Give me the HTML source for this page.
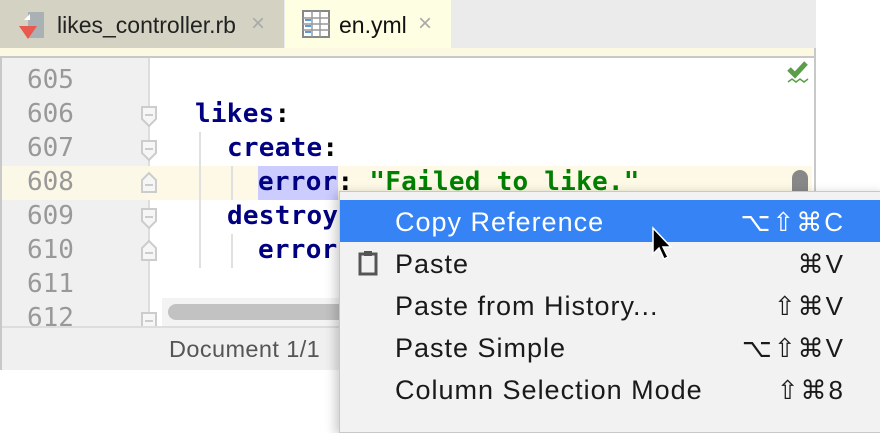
<!DOCTYPE html>
<html><head><style>
body{margin:0;width:880px;height:424px;background:#fff;position:relative;overflow:hidden;font-family:"Liberation Sans",sans-serif}
.a{position:absolute}
.num{position:absolute;left:27px;font:26px "DejaVu Sans Mono",monospace;color:#999;line-height:34px}
.code{position:absolute;font:bold 26px "DejaVu Sans Mono",monospace;color:#000080;white-space:pre;line-height:34px;letter-spacing:.25px}
.mi{position:absolute;left:395px;font-size:27px;letter-spacing:1px;color:#1a1a1a;line-height:42px}
.sc{position:absolute;right:35px;font-size:26px;letter-spacing:2px;color:#1a1a1a;line-height:42px}
.fold{position:absolute;left:140px}
</style></head><body>
<div class="a" style="left:0;top:0;width:816px;height:370px;border:2px solid #c8c8c8;border-top:none;box-sizing:border-box;background:#fff"></div>
<div class="a" style="left:0;top:0;width:816px;height:50px;background:#ebebeb;border-bottom:2px solid #c8c8c8;box-sizing:border-box"></div>
<div class="a" style="left:0;top:0;width:284px;height:48px;background:#d4d3c3"></div>
<div class="a" style="left:285px;top:0;width:166px;height:50px;background:#fefee2"></div>
<div class="a" style="left:0;top:48px;width:814px;height:8px;background:#fcf9e2;border-bottom:2px solid #c8c8c8"></div>
<svg class="a" style="left:16px;top:10px" width="30" height="32"><path d="M12 2h16v26H12z" fill="#a9b1b5"/><path d="M14 4v6h-6z" fill="#fff"/><path d="M3 16h18l-9 13z" fill="#e85a4f"/></svg>
<div class="a" style="left:57px;top:12px;font-size:23px;color:#222">likes_controller.rb</div>
<div class="a" style="left:251px;top:10px;font-size:24px;color:#aaa">×</div>
<svg class="a" style="left:302px;top:10px" width="28" height="28"><rect x="1" y="1" width="26" height="26" fill="#fff" stroke="#888" stroke-width="2"/><path d="M1 8h26M1 14h26M1 20h26M10 1v26M18 1v26" stroke="#999" stroke-width="1.5"/><path d="M3 10h6M3 16h6M3 22h6" stroke="#5b9bd5" stroke-width="2"/></svg>
<div class="a" style="left:339px;top:12px;font-size:23px;color:#111">en.yml</div>
<div class="a" style="left:418px;top:10px;font-size:24px;color:#aaa">×</div>
<div class="a" style="left:2px;top:58px;width:146px;height:270px;background:#f0f0f0;border-right:2px solid #ddd"></div>
<div class="a" style="left:2px;top:166px;width:810px;height:34px;background:#fdf9e6"></div>
<div class="a" style="left:2px;top:166px;width:146px;height:34px;background:#fbf8e8"></div>
<div class="num" style="top:63px">605</div><div class="num" style="top:97px">606</div><div class="num" style="top:131px">607</div><div class="num" style="top:165px">608</div><div class="num" style="top:199px">609</div><div class="num" style="top:233px">610</div><div class="num" style="top:267px">611</div><div class="num" style="top:301px">612</div>
<svg class="fold" style="top:106px" width="18" height="22"><path d="M2 1h14v12l-7 7-7-7z" fill="#f6f6f6" stroke="#ccc" stroke-width="2"/><path d="M5 9h8" stroke="#ccc" stroke-width="2"/></svg>
<svg class="fold" style="top:140px" width="18" height="22"><path d="M2 1h14v12l-7 7-7-7z" fill="#f6f6f6" stroke="#ccc" stroke-width="2"/><path d="M5 9h8" stroke="#ccc" stroke-width="2"/></svg>
<svg class="fold" style="top:171px" width="18" height="22"><path d="M2 21h14V9L9 2 2 9z" fill="#f6f6f6" stroke="#ccc" stroke-width="2"/><path d="M5 14h8" stroke="#ccc" stroke-width="2"/></svg>
<svg class="fold" style="top:208px" width="18" height="22"><path d="M2 1h14v12l-7 7-7-7z" fill="#f6f6f6" stroke="#ccc" stroke-width="2"/><path d="M5 9h8" stroke="#ccc" stroke-width="2"/></svg>
<svg class="fold" style="top:239px" width="18" height="22"><path d="M2 21h14V9L9 2 2 9z" fill="#f6f6f6" stroke="#ccc" stroke-width="2"/><path d="M5 14h8" stroke="#ccc" stroke-width="2"/></svg>
<svg class="fold" style="top:312px" width="18" height="16"><path d="M2 1h14v15H2z" fill="#f6f6f6" stroke="#ccc" stroke-width="2"/><path d="M5 9h8" stroke="#ccc" stroke-width="2"/></svg>
<div class="a" style="left:199px;top:132px;width:2px;height:136px;background:#e0e0e0"></div>
<div class="a" style="left:231px;top:166px;width:2px;height:34px;background:#e0e0e0"></div>
<div class="a" style="left:231px;top:234px;width:2px;height:34px;background:#e0e0e0"></div>
<div class="a" style="left:258px;top:166px;width:80px;height:34px;background:#ccccff"></div>
<div class="code" style="left:195px;top:97px">likes<span style="color:#000">:</span></div>
<div class="code" style="left:227px;top:131px">create<span style="color:#000">:</span></div>
<div class="code" style="left:258px;top:165px">error<span style="color:#000">: </span><span style="color:#008000">"Failed to like."</span></div>
<div class="code" style="left:227px;top:199px">destroy</div>
<div class="code" style="left:258px;top:233px">error</div>
<svg class="a" style="left:786px;top:60px" width="24" height="24"><path d="M3 9l6 6L20 3" stroke="#5a9e4a" stroke-width="5" fill="none"/><path d="M2 22l4-3 4 3 4-3 4 3 4-3" stroke="#5a9e4a" stroke-width="1.5" fill="none"/></svg>
<div class="a" style="left:792px;top:170px;width:16px;height:30px;background:#888;border-radius:8px"></div>
<div class="a" style="left:162px;top:298px;width:200px;height:30px;background:#f3f3f3"></div>
<div class="a" style="left:168px;top:304px;width:190px;height:16px;background:#c2c2c2;border-radius:8px"></div>
<div class="a" style="left:2px;top:326px;width:812px;height:42px;background:#f0f0f0;border-top:2px solid #ddd"></div>
<div class="a" style="left:169px;top:336px;font-size:23.5px;letter-spacing:.4px;color:#555">Document 1/1</div>
<div class="a" style="left:339px;top:191px;width:545px;height:240px;background:#f2f2f2;border:1px solid #c8c8c8;box-shadow:-4px 2px 10px rgba(0,0,0,.2)"></div>
<div class="a" style="left:340px;top:200px;width:540px;height:42px;background:#3583f5"></div>
<div class="mi" style="top:201px;color:#fff">Copy Reference</div><div class="sc" style="top:201px;color:#fff">⌥⇧⌘C</div>
<svg class="a" style="left:358px;top:250px" width="20" height="26"><rect x="2" y="4" width="16" height="20" fill="none" stroke="#555" stroke-width="3"/><rect x="6" y="1" width="8" height="5" fill="#555"/></svg>
<div class="mi" style="top:243px">Paste</div><div class="sc" style="top:243px">⌘V</div>
<div class="mi" style="top:285px">Paste from History...</div><div class="sc" style="top:285px">⇧⌘V</div>
<div class="mi" style="top:327px">Paste Simple</div><div class="sc" style="top:327px">⌥⇧⌘V</div>
<div class="mi" style="top:369px">Column Selection Mode</div><div class="sc" style="top:369px">⇧⌘8</div>
<svg class="a" style="left:650px;top:226px" width="22" height="36"><path d="M3 2v26l6-6 5 11 4-2-5-10h8z" fill="#000" stroke="#fff" stroke-width="1.5"/></svg>
</body></html>
